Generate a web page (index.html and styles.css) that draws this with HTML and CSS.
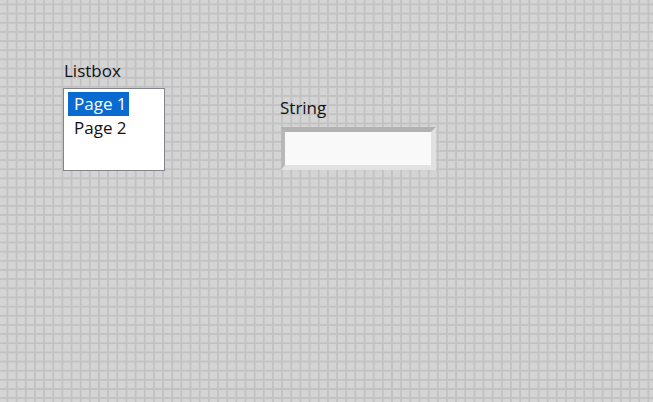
FILE: index.html
```html
<!DOCTYPE html>
<html lang="en">
<head>
  <meta charset="UTF-8">
  <title>Front Panel</title>
  <link rel="stylesheet" href="styles.css">
</head>
<body>
<div class="panel">
  <div class="control listbox-control">
    <div class="label">Listbox</div>
    <div class="listbox">
      <div class="item"><span class="selected">Page 1</span></div>
      <div class="item"><span>Page 2</span></div>
    </div>
  </div>
  <div class="control string-control">
    <div class="label">String</div>
    <div class="string-frame">
      <div class="string-box"></div>
    </div>
  </div>
</div>
</body>
</html>
```
FILE: styles.css
```css
html, body {
  margin: 0;
  height: 100%;
}
body {
  font-family: "Open Sans", "Noto Sans", sans-serif;
  font-size: 17px;
  color: #111;
  background-color: #d4d4d4;
  background-image:
    linear-gradient(to right, #c2c2c2 2px, transparent 2px),
    linear-gradient(to bottom, #c2c2c2 2px, transparent 2px);
  background-size: 9.17px 9.17px;
  background-position: 6.5px 3.5px;
}
.panel {
  display: flex;
  align-items: flex-start;
  padding: 60px 0 0 63px;
}
.label {
  line-height: 22px;
}
.listbox-control .label {
  margin-bottom: 6px;
  padding-left: 1px;
}
.listbox {
  width: 100px;
  height: 78px;
  background: #fff;
  border: 1px solid #84848c;
  padding-top: 3px;
}
.item {
  height: 24px;
  line-height: 24px;
  padding-left: 4px;
}
.item span {
  display: inline-block;
  padding: 0 2px 0 6px;
}
.item .selected {
  background: #0a6ad0;
  color: #fff;
}
.string-control {
  margin-left: 115px;
  margin-top: 37px;
}
.string-control .label {
  margin-bottom: 8px;
}
.string-frame {
  width: 146px;
  height: 33px;
  border-style: solid;
  border-width: 5px 5px 5px 4px;
  border-color: #b2b2b2 #e0e0e0 #e2e2e2 #b8b8b8;
  margin-left: 1px;
}
.string-box {
  height: 100%;
  background: #f9f9f9;
}
```
